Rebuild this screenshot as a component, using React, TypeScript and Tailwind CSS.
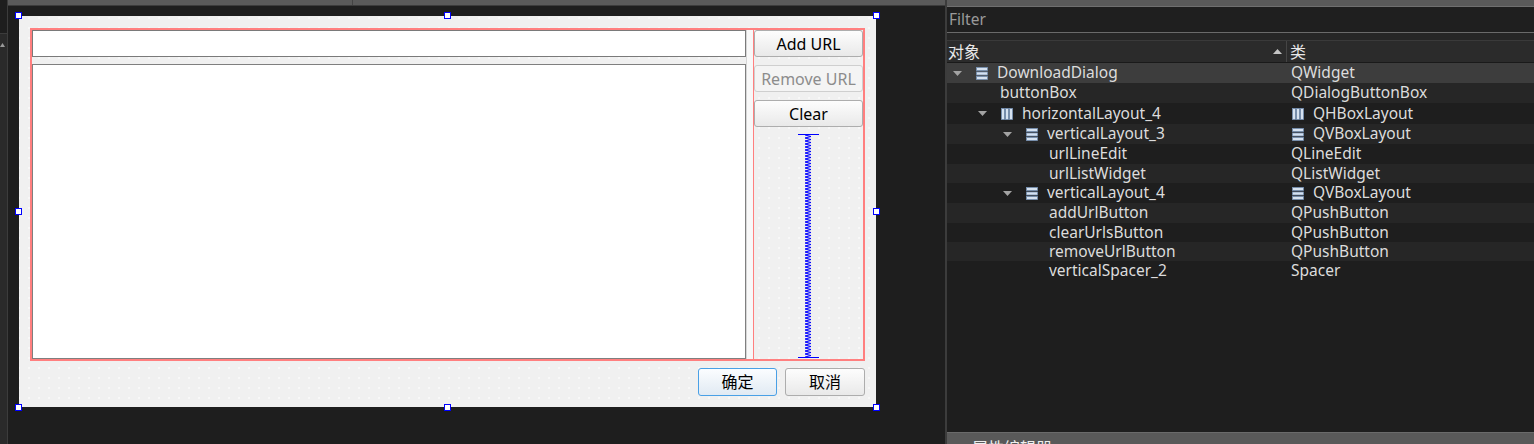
import React from "react";

const font = "font-['Noto_Sans','Noto_Sans_CJK_SC',sans-serif]";

type TreeRow = {
  name: string;
  cls: string;
  level: number;
  icon?: "v" | "h";
  clsIcon?: "v" | "h";
  h: string;
};

const rows: TreeRow[] = [
  { name: "DownloadDialog", cls: "QWidget", level: 0, icon: "v", h: "h-[20px]" },
  { name: "buttonBox", cls: "QDialogButtonBox", level: 1, h: "h-[20px]" },
  { name: "horizontalLayout_4", cls: "QHBoxLayout", level: 1, icon: "h", clsIcon: "h", h: "h-[21px]" },
  { name: "verticalLayout_3", cls: "QVBoxLayout", level: 2, icon: "v", clsIcon: "v", h: "h-[20px]" },
  { name: "urlLineEdit", cls: "QLineEdit", level: 3, h: "h-[20px]" },
  { name: "urlListWidget", cls: "QListWidget", level: 3, h: "h-[19px]" },
  { name: "verticalLayout_4", cls: "QVBoxLayout", level: 2, icon: "v", clsIcon: "v", h: "h-[20px]" },
  { name: "addUrlButton", cls: "QPushButton", level: 3, h: "h-[20px]" },
  { name: "clearUrlsButton", cls: "QPushButton", level: 3, h: "h-[19px]" },
  { name: "removeUrlButton", cls: "QPushButton", level: 3, h: "h-[19px]" },
  { name: "verticalSpacer_2", cls: "Spacer", level: 3, h: "h-[19px]" },
];

const indent = ["pl-[6px]", "pl-[31px]", "pl-[56px]", "pl-[80px]"];

function VLayoutIcon() {
  return (
    <svg width="12" height="13" viewBox="0 0 12 13" className="shrink-0">
      {[0.5, 5, 9.5].map((y) => (
        <rect key={y} x="0.5" y={y} width="11" height="3" fill="#d6e2f0" stroke="#7591b4" strokeWidth="0.8" />
      ))}
    </svg>
  );
}

function HLayoutIcon() {
  return (
    <svg width="12" height="12" viewBox="0 0 12 12" className="shrink-0">
      {[0.5, 4.5, 8.5].map((x) => (
        <rect key={x} x={x} y="0.5" width="3" height="11" fill="#d6e2f0" stroke="#7591b4" strokeWidth="0.8" />
      ))}
    </svg>
  );
}

function LayoutIcon({ kind }: { kind: "v" | "h" }) {
  return kind === "v" ? <VLayoutIcon /> : <HLayoutIcon />;
}

function ExpandArrow() {
  return (
    <svg width="9" height="5" viewBox="0 0 9 5">
      <path d="M0 0H9L4.5 5Z" fill="#a3a3a3" />
    </svg>
  );
}

function Handle({ pos }: { pos: string }) {
  return <div className={`absolute w-[7px] h-[7px] border-[1.5px] border-[#0000ff] bg-white ${pos}`} />;
}

function Spacer() {
  const pts: string[] = [];
  for (let y = 1; y <= 223; y += 1.5) {
    pts.push(`${Math.round((y - 1) / 1.5) % 2 === 0 ? 7 : 13},${y}`);
  }
  return (
    <svg width="22" height="224" viewBox="0 0 22 224" className="mx-auto mt-[7px]">
      <line x1="0" y1="0.5" x2="21" y2="0.5" stroke="#0000ff" strokeWidth="1" />
      <polyline points={pts.join(" ")} fill="none" stroke="#0000ff" strokeWidth="1" />
      <line x1="0" y1="223.5" x2="21" y2="223.5" stroke="#0000ff" strokeWidth="1" />
    </svg>
  );
}

function QtButton({ label, disabled, def, w }: { label: string; disabled?: boolean; def?: boolean; w: string }) {
  const look = disabled
    ? "border-[#cfcfcf] bg-[#f4f4f4] text-[#8c8c8c]"
    : def
      ? "border-[#4aa0e6] bg-gradient-to-b from-[#fbfdff] to-[#e1eaf3] text-black"
      : "border-[#adadad] bg-gradient-to-b from-[#fdfdfd] to-[#e9e9e9] text-black";
  return (
    <div className={`flex items-center justify-center border rounded-[3px] text-[16px] leading-none ${look} ${w}`}>
      {label}
    </div>
  );
}

function FormDesigner() {
  return (
    <div className="relative w-[857px] h-[391px] bg-[#f0f0f0] bg-[radial-gradient(circle,#fbfbfb_0.6px,transparent_0.9px)] bg-size-[10px_10px] bg-position-[5px_7px] pt-[12px] px-[11px] flex flex-col">
      <div className="w-[835px] h-[333px] border-2 border-[#ff7f7f] flex">
        <div className="w-[714px] flex flex-col">
          <div className="h-[27px] border border-[#7a7a7a] bg-white" />
          <div className="h-[295px] mt-[7px] border border-[#7f7f7f] bg-white" />
        </div>
        <div className="w-[7px] border-l border-[#d6d6d6] bg-[#f8f8f8]" />
        <div className="w-[110px] border-l border-[#ff7f7f] flex flex-col gap-[8px]">
          <QtButton label="Add URL" w="w-[109px] h-[27px]" />
          <QtButton label="Remove URL" disabled w="w-[109px] h-[27px]" />
          <div className="flex flex-col">
            <QtButton label="Clear" w="w-[109px] h-[27px]" />
            <Spacer />
          </div>
        </div>
      </div>
      <div className="flex justify-end gap-[8px] mt-[7px]">
        <QtButton label="确定" def w="w-[79px] h-[28px]" />
        <QtButton label="取消" w="w-[80px] h-[28px]" />
      </div>
      <Handle pos="left-[-4px] top-[-4px]" />
      <Handle pos="left-[425px] top-[-4px]" />
      <Handle pos="left-[854px] top-[-4px]" />
      <Handle pos="left-[-4px] top-[192px]" />
      <Handle pos="left-[854px] top-[192px]" />
      <Handle pos="left-[-4px] top-[388px]" />
      <Handle pos="left-[425px] top-[388px]" />
      <Handle pos="left-[854px] top-[388px]" />
    </div>
  );
}

function ObjectInspector() {
  return (
    <div className="w-[589px] h-[444px] border-l-2 border-[#3c3c3c] flex flex-col text-[15.5px] text-[#dcdcdc]">
      <div className="h-[6px] bg-[#5a5a5a] shrink-0" />
      <div className="h-[1px] bg-[#707070] shrink-0" />
      <div className="h-[25px] bg-[#1f1f1f] flex items-center pl-[2px] text-[#9a9a9a] leading-none shrink-0">Filter</div>
      <div className="h-[1px] bg-[#6a6a6a] shrink-0" />
      <div className="h-[7px] bg-[#262626] shrink-0" />
      <div className="h-[1px] bg-[#3a3a3a] shrink-0" />
      <div className="h-[21px] bg-[#2b2b2b] flex text-[16px] text-[#e8e8e8] leading-none shrink-0">
        <div className="w-[340px] flex items-center justify-between pl-[1px] pr-[4px] border-r border-[#454545]">
          <span>对象</span>
          <svg width="9" height="5" viewBox="0 0 9 5">
            <path d="M0 5H9L4.5 0Z" fill="#c4c4c4" />
          </svg>
        </div>
        <div className="flex items-center pl-[3px]">类</div>
      </div>
      <div className="h-[1px] bg-[#1a1a1a] shrink-0" />
      {rows.map((r, i) => (
        <div
          key={r.name}
          className={`flex leading-none shrink-0 ${r.h} ${i === 0 ? "bg-[#3d3d3d]" : i % 2 === 1 ? "bg-[#262626]" : "bg-[#1e1e1e]"}`}
        >
          <div className={`w-[340px] flex items-center ${indent[r.level]}`}>
            {r.icon ? (
              <>
                <div className="w-[23px] flex items-center">
                  <ExpandArrow />
                </div>
                <LayoutIcon kind={r.icon} />
                <span className="ml-[9px]">{r.name}</span>
              </>
            ) : (
              <>
                <div className="w-[22px]" />
                <span>{r.name}</span>
              </>
            )}
          </div>
          <div className="flex items-center pl-[4px]">
            {r.clsIcon ? (
              <>
                <div className="ml-[1px] flex">
                  <LayoutIcon kind={r.clsIcon} />
                </div>
                <span className="ml-[9px]">{r.cls}</span>
              </>
            ) : (
              <span>{r.cls}</span>
            )}
          </div>
        </div>
      ))}
      <div className="flex-1 bg-[#1e1e1e]" />
      <div className="h-[12px] shrink-0 border-t border-[#6a6a6a] bg-[#595959] overflow-hidden pl-[25px] pt-[7px] text-[16px] leading-none text-[#eeeeee]">
        属性编辑器
      </div>
    </div>
  );
}

export default function App() {
  return (
    <div className={`w-[1534px] h-[444px] flex bg-[#1e1e1e] overflow-hidden ${font}`}>
      <div className="w-[8px] h-full flex flex-col border-r border-[#3c3c3c] bg-[#2a2a2a]">
        <div className="h-[34px] bg-[#1e1e1e] border-b border-[#3c3c3c]" />
        <div className="mt-[8px]">
          <svg width="5" height="5" viewBox="0 0 5 5">
            <path d="M0 5H5L2.5 1Z" fill="#9a9a9a" />
          </svg>
        </div>
      </div>
      <div className="w-[937px] h-full flex flex-col">
        <div className="h-[5px] bg-[#5a5a5a] flex">
          <div className="w-[344px]" />
          <div className="w-[1px] bg-[#444444]" />
        </div>
        <div className="h-[1px] bg-[#3c3c3c]" />
        <div className="pl-[11px] pt-[10px]">
          <FormDesigner />
        </div>
      </div>
      <ObjectInspector />
    </div>
  );
}
